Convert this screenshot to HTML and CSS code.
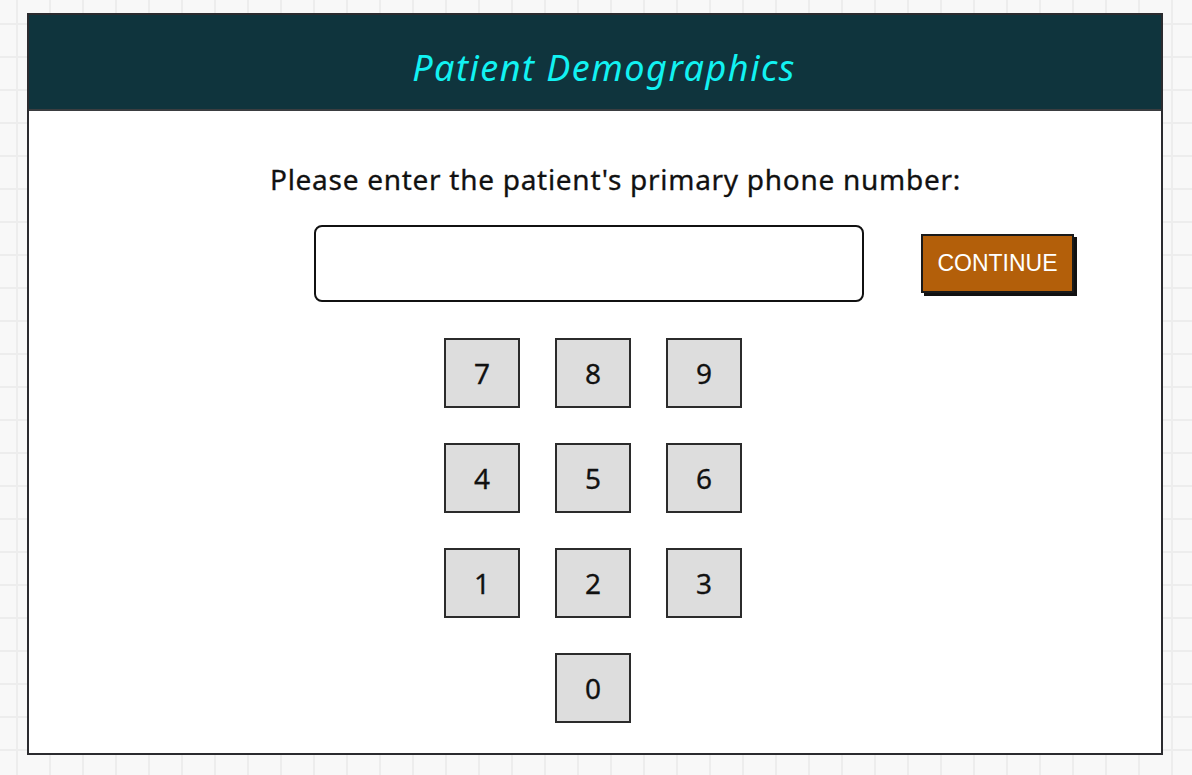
FILE: index.html
```html
<!DOCTYPE html>
<html>
<head>
<meta charset="utf-8">
<title>Patient Demographics</title>
<link rel="stylesheet" href="styles.css">
</head>
<body>
<div class="window">
  <header class="header">
    <h1 class="title">Patient Demographics</h1>
  </header>
  <main class="content">
    <p class="prompt">Please enter the patient's primary phone number:</p>
    <div class="entry-row">
      <div class="phone-input"></div>
      <button class="continue">CONTINUE</button>
    </div>
    <div class="keypad">
      <button class="key">7</button>
      <button class="key">8</button>
      <button class="key">9</button>
      <button class="key">4</button>
      <button class="key">5</button>
      <button class="key">6</button>
      <button class="key">1</button>
      <button class="key">2</button>
      <button class="key">3</button>
      <button class="key key-zero">0</button>
    </div>
  </main>
</div>
</body>
</html>
```

FILE: styles.css
```css
html, body {
  margin: 0;
  padding: 0;
}

body {
  width: 1192px;
  height: 775px;
  overflow: hidden;
  background-color: #f8f8f8;
  background-image:
    linear-gradient(to right, #ededed 0, #ededed 2px, transparent 2px),
    linear-gradient(to bottom, #ededed 0, #ededed 2px, transparent 2px);
  background-size: 33px 33px, 33px 33px;
  background-position: 16px 0, 0 23px;
  font-family: "Noto Sans", "DejaVu Sans", sans-serif;
  color: #111;
}

.window {
  margin: 13px 0 0 27px;
  width: 1136px;
  height: 742px;
  box-sizing: border-box;
  border: 2px solid #2b2b2f;
  background: #fff;
  display: flex;
  flex-direction: column;
}

.header {
  height: 94px;
  flex: none;
  background: #0f343d;
  border-bottom: 2px solid #3a3d40;
  display: flex;
  align-items: center;
  justify-content: center;
}

.title {
  margin: 10px 0 0 18px;
  font-family: "Noto Sans", sans-serif;
  font-style: italic;
  font-weight: 400;
  font-size: 36px;
  letter-spacing: 1.5px;
  color: #12f2f2;
}

.content {
  display: flex;
  flex-direction: column;
  align-items: flex-start;
}

.prompt {
  margin: 50px 0 0 241px;
  font-size: 28px;
  line-height: 36px;
  letter-spacing: 0.72px;
  color: #111;
  -webkit-text-stroke: 0.3px #111;
}

.entry-row {
  display: flex;
  align-items: flex-start;
  gap: 57px;
  margin: 28px 0 0 285px;
}

.phone-input {
  width: 550px;
  height: 77px;
  box-sizing: border-box;
  border: 2px solid #111;
  border-radius: 8px;
  background: #fff;
}

.continue {
  margin-top: 9px;
  width: 153px;
  height: 59px;
  box-sizing: border-box;
  border: 2px solid #1a1a1a;
  background: #b35f0a;
  box-shadow: 3px 3px 0 #111;
  color: #fff;
  font-family: "Liberation Sans", sans-serif;
  font-size: 23px;
  padding: 0;
}

.keypad {
  display: grid;
  grid-template-columns: repeat(3, 76px);
  grid-auto-rows: 70px;
  column-gap: 35px;
  row-gap: 35px;
  margin: 36px 0 0 415px;
}

.key {
  box-sizing: border-box;
  border: 2px solid #2b2b2b;
  background: #dddddd;
  color: #111;
  font-family: "Noto Sans", sans-serif;
  font-size: 28px;
  -webkit-text-stroke: 0.3px #111;
  padding: 0;
}

.key-zero {
  grid-column: 2;
}
```
